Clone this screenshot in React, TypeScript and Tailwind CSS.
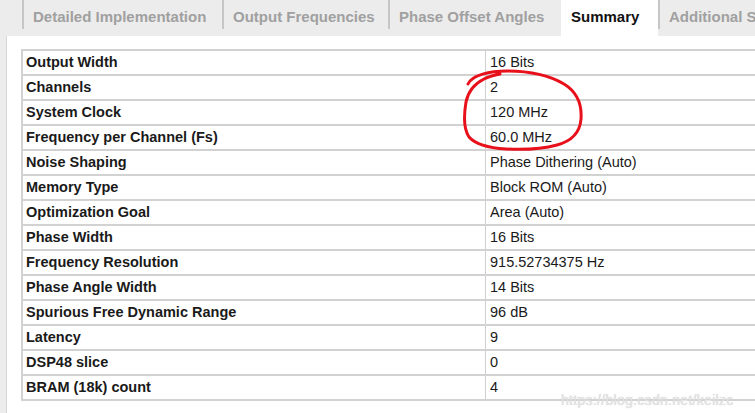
import React from "react";

const tabs = [
  { label: "Detailed Implementation", width: "w-[200px]", active: false },
  { label: "Output Frequencies", width: "w-[166px]", active: false },
  { label: "Phase Offset Angles", width: "w-[173px]", active: false },
  { label: "Summary", width: "w-[97px]", active: true },
  { label: "Additional Summary", width: "w-[160px]", active: false },
];

const rows = [
  ["Output Width", "16 Bits"],
  ["Channels", "2"],
  ["System Clock", "120 MHz"],
  ["Frequency per Channel (Fs)", "60.0 MHz"],
  ["Noise Shaping", "Phase Dithering (Auto)"],
  ["Memory Type", "Block ROM (Auto)"],
  ["Optimization Goal", "Area (Auto)"],
  ["Phase Width", "16 Bits"],
  ["Frequency Resolution", "915.52734375 Hz"],
  ["Phase Angle Width", "14 Bits"],
  ["Spurious Free Dynamic Range", "96 dB"],
  ["Latency", "9"],
  ["DSP48 slice", "0"],
  ["BRAM (18k) count", "4"],
];

export default function App() {
  return (
    <div className="relative w-[755px] h-[413px] overflow-hidden bg-white font-['Liberation_Sans',Arial,sans-serif] text-[14.5px]">
      {/* Tab bar */}
      <div className="flex h-[36px] bg-[#ececec] pl-[22px] text-[15px]">
        {tabs.map((tab) =>
          tab.active ? (
            <div
              key={tab.label}
              className={`${tab.width} shrink-0 h-[36px] bg-white pl-[10px] pt-[6px] font-bold text-[#111111]`}
            >
              {tab.label}
            </div>
          ) : (
            <div
              key={tab.label}
              className={`${tab.width} shrink-0 h-[29px] border-l-2 border-[#c6c6c6] pl-[9px] pt-[6px] font-bold text-[#a0a0a0] whitespace-nowrap`}
            >
              {tab.label}
            </div>
          )
        )}
      </div>

      {/* Body */}
      <div className="flex h-[377px]">
        <div className="w-[7px] shrink-0 bg-[#ececec] border-r border-[#d6d6d6]" />
        <div className="flex-1 pl-[14px] pt-[13px] overflow-hidden">
          <div className="w-[800px] border-t-2 border-l-2 border-[#d2d2d2]">
            {rows.map(([label, value]) => (
              <div
                key={label}
                className="flex h-[25px] border-b-2 border-[#d2d2d2] items-center"
              >
                <div className="w-[463px] h-full flex items-center pl-[3px] font-bold text-[#1a1a1a] border-r border-[#cfcfcf]">
                  {label}
                </div>
                <div className="flex-1 h-full flex items-center pl-[4px] text-[#1a1a1a]">
                  {value}
                </div>
              </div>
            ))}
          </div>
        </div>
      </div>

      {/* Red hand-drawn circle */}
      <svg
        className="absolute left-0 top-0 pointer-events-none"
        width="755"
        height="413"
        viewBox="0 0 755 413"
      >
        <path
          d="M468 84 C472 75 490 71 507 71 C526 71 547 74 564 84 C577 92 582 105 581 119 C580 132 572 141 557 145 C542 149 524 150 506 149 C490 148 476 145 469 137 C463 128 464 114 466 102 C468 92 474 84 484 79 C490 76 496 75 500 74"
          fill="none"
          stroke="#e8101a"
          strokeWidth="3"
          strokeLinecap="round"
        />
      </svg>

      {/* Watermark */}
      <div className="absolute left-[561px] top-[390px] text-[14px] text-[#e6e6e6] tracking-[0.3px] [text-shadow:0_0_1px_#c4c4c4]">
        https://blog.csdn.net/keilzc
      </div>
    </div>
  );
}
